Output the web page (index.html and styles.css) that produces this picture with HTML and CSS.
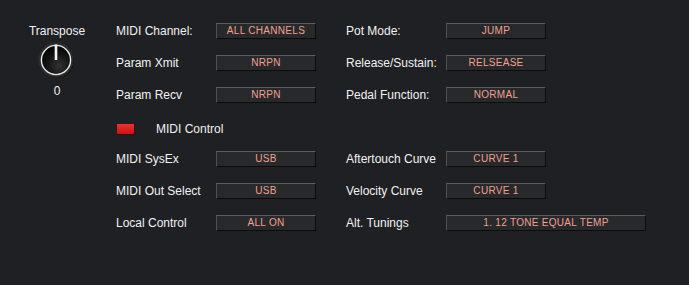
FILE: index.html
```html
<!DOCTYPE html>
<html lang="en">
<head>
    <meta charset="UTF-8" />
    <title>MIDI Settings</title>
    <link rel="stylesheet" href="styles.css">
</head>
<body>
    <div class="panel">
        <div class="transpose">
            <div class="transpose-label">Transpose</div>
            <svg class="knob" width="40" height="40" viewBox="0 0 40 40">
                <defs>
                    <radialGradient id="knobFace" cx="60%" cy="70%" r="65%">
                        <stop offset="0" stop-color="#333" />
                        <stop offset="0.6" stop-color="#141414" />
                        <stop offset="1" stop-color="#050505" />
                    </radialGradient>
                </defs>
                <circle cx="21" cy="21" r="17" fill="#0e0e0e" opacity="0.6" />
                <circle cx="20" cy="20" r="17" fill="#2b2b2b" stroke="#3e3e3e" stroke-width="1" stroke-dasharray="1 1" />
                <circle cx="20" cy="20" r="14.6" fill="url(#knobFace)" stroke="#e8e8e8" stroke-width="1.4" />
                <line x1="20" y1="4.5" x2="20" y2="20" stroke="#f4f4f4" stroke-width="2.6" />
            </svg>
            <div class="transpose-value">0</div>
        </div>

        <div class="settings">
            <div class="label">MIDI Channel:</div>
            <div class="field">ALL CHANNELS</div>
            <div class="label">Pot Mode:</div>
            <div class="field">JUMP</div>

            <div class="label">Param Xmit</div>
            <div class="field">NRPN</div>
            <div class="label">Release/Sustain:</div>
            <div class="field">RELSEASE</div>

            <div class="label">Param Recv</div>
            <div class="field">NRPN</div>
            <div class="label">Pedal Function:</div>
            <div class="field">NORMAL</div>

            <div class="toggle">
                <span class="led"></span>
                <span class="toggle-label">MIDI Control</span>
            </div>

            <div class="label">MIDI SysEx</div>
            <div class="field">USB</div>
            <div class="label">Aftertouch Curve</div>
            <div class="field">CURVE 1</div>

            <div class="label">MIDI Out Select</div>
            <div class="field">USB</div>
            <div class="label">Velocity Curve</div>
            <div class="field">CURVE 1</div>

            <div class="label">Local Control</div>
            <div class="field">ALL ON</div>
            <div class="label">Alt. Tunings</div>
            <div class="field wide">1. 12 TONE EQUAL TEMP</div>
        </div>
    </div>
</body>
</html>
```

FILE: styles.css
```css
body {
    margin: 0;
    background-color: #1f2023;
    color: #f2f2f2;
    font-family: "Liberation Sans", Arial, sans-serif;
    font-size: 12px;
    height: 285px;
}

.panel {
    display: flex;
    padding-top: 23px;
}

.transpose {
    width: 116px;
    display: flex;
    flex-direction: column;
    align-items: center;
    padding-right: 2px;
    box-sizing: border-box;
}

.transpose-label {
    line-height: 14px;
    margin-top: 1px;
}

.knob {
    display: block;
    margin-top: 2px;
    margin-left: -2px;
}

.transpose-value {
    margin-top: 4px;
    line-height: 14px;
}

.settings {
    display: grid;
    grid-template-columns: 100px 100px 100px 200px;
    grid-auto-rows: 16px;
    row-gap: 16px;
}

.label {
    line-height: 16px;
    white-space: nowrap;
}

.label:nth-child(4n+3),
.toggle ~ .label:nth-child(4n) {
    margin-left: 30px;
}

.field {
    width: 100px;
    height: 16px;
    box-sizing: border-box;
    border: 1px solid #0c0c0c;
    border-top-color: #5c5c5c;
    border-left-color: #505050;
    background-color: #28292b;
    color: #f4a08e;
    font-size: 10px;
    line-height: 14px;
    text-align: center;
    letter-spacing: 0.3px;
}

.field:nth-child(4n+2),
.toggle ~ .field:nth-child(4n+3) {
    margin-right: 30px;
}

.field:nth-child(4n),
.toggle ~ .field:nth-child(4n+1) {
    margin-left: 30px;
}

.field.wide {
    width: 200px;
}

.toggle {
    grid-column: 1 / -1;
    display: flex;
    align-items: center;
    padding-top: 4px;
}

.led {
    width: 18px;
    height: 11px;
    margin-left: 1px;
    background: linear-gradient(#f03030, #c81414);
    border-right: 1px solid #3a0a0a;
    border-bottom: 1px solid #3a0a0a;
    box-sizing: border-box;
}

.toggle-label {
    margin-left: 21px;
}
```
